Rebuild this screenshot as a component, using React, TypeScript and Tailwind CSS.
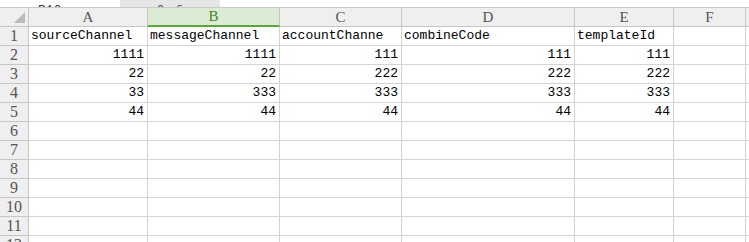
const COLS = ["A", "B", "C", "D", "E", "F"];

const HEADERS = ["sourceChannel", "messageChannel", "accountChanne", "combineCode", "templateId"];

const DATA: string[][] = [
  ["1111", "1111", "111", "111", "111"],
  ["22", "22", "222", "222", "222"],
  ["33", "333", "333", "333", "333"],
  ["44", "44", "44", "44", "44"],
];

const ROW_COUNT = 12;

const cellFont = { fontFamily: '"Liberation Mono", "Noto Sans CJK SC", monospace' };
const headFont = { fontFamily: '"Liberation Serif", "Noto Sans CJK SC", serif' };

export default function App() {
  const rows: (string[] | null)[] = [];
  for (let i = 0; i < ROW_COUNT; i++) {
    if (i === 0) rows.push(HEADERS);
    else if (i <= DATA.length) rows.push(DATA[i - 1]);
    else rows.push(null);
  }

  return (
    <div className="w-[749px] h-[242px] overflow-hidden bg-white" style={cellFont}>
      {/* Toolbar strip, cut off at the top */}
      <div className="h-[8px] flex border-b border-[#c9c9c9] overflow-hidden">
        <div className="w-[120px] flex items-end pl-[38px]">
          <span className="text-[13px] leading-[13px] -mb-[10px] text-[#333]">B16</span>
        </div>
        <div className="w-[100px] bg-[#e6e6e6] flex items-end pl-[37px] gap-[10px]">
          <span className="text-[12px] leading-[12px] -mb-[10px] text-[#555]">Q</span>
          <span className="text-[12px] leading-[12px] -mb-[10px] text-[#555] italic">fx</span>
        </div>
        <div className="flex-1" />
      </div>

      <div className="grid grid-cols-[29px_119px_132px_122px_173px_99px_72px_1fr] auto-rows-[19px]">
        {/* Column header row */}
        <div className="relative bg-[#efefef] border-r border-b border-[#c6c6c6]">
          <div className="absolute right-[3px] bottom-[3px] w-0 h-0 border-l-[11px] border-l-transparent border-b-[11px] border-b-[#bcbcbc]" />
        </div>
        {COLS.map((c) =>
          c === "B" ? (
            <div
              key={c}
              style={headFont}
              className="bg-[#dcebd5] border-r border-[#c6c6c6] border-b-2 border-b-[#5aa63a] flex items-center justify-center text-[15px] text-[#3f8a25]"
            >
              {c}
            </div>
          ) : (
            <div
              key={c}
              style={headFont}
              className="bg-[#efefef] border-r border-b border-[#c6c6c6] flex items-center justify-center text-[15px] text-[#555]"
            >
              {c}
            </div>
          )
        )}
        <div className="bg-[#efefef] border-b border-[#c6c6c6]" />

        {/* Body rows */}
        {rows.map((r, i) => (
          <Row key={i} index={i} values={r} />
        ))}
      </div>
    </div>
  );
}

function Row({ index, values }: { index: number; values: string[] | null }) {
  const isHeader = index === 0;
  return (
    <>
      <div
        style={headFont}
        className="bg-[#efefef] border-r border-b border-[#c6c6c6] flex items-center justify-center text-[16px] text-[#555]"
      >
        {index + 1}
      </div>
      {COLS.map((c, j) => {
        const v = values && j < values.length ? values[j] : "";
        return (
          <div
            key={c}
            className={`border-r border-b border-[#d4d4d4] flex items-end pb-[1px] text-[13px] leading-[16px] text-black whitespace-nowrap ${
              isHeader ? "justify-start pl-[2px]" : "justify-end pr-[3px]"
            }`}
          >
            {v}
          </div>
        );
      })}
      <div className="border-b border-[#d4d4d4]" />
    </>
  );
}
